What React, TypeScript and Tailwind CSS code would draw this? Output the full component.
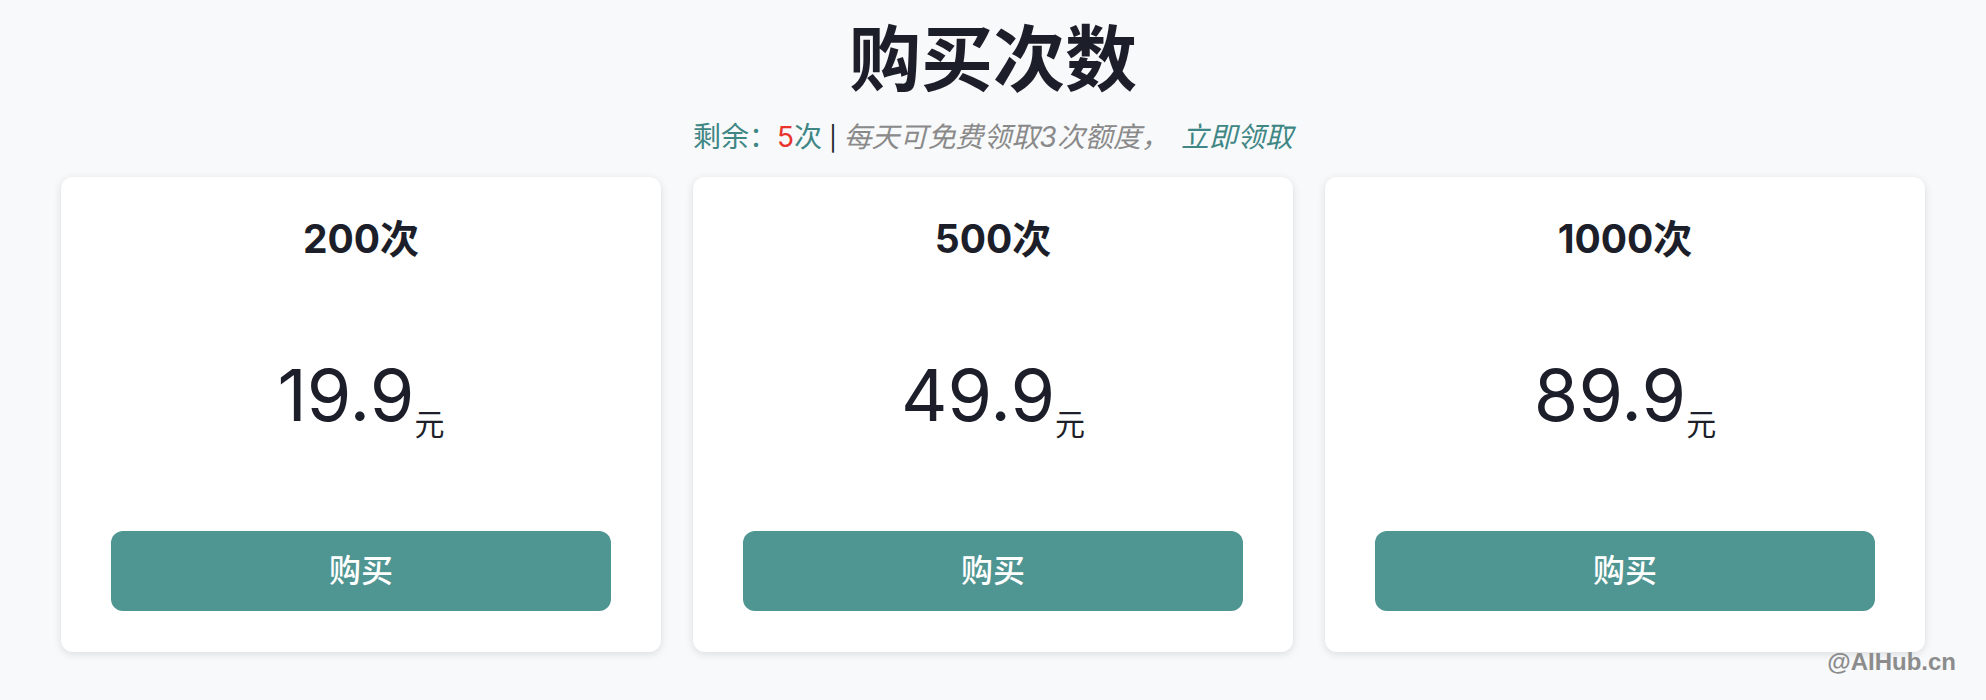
import React from "react"

const plans = [
  { count: "200次", price: "19.9" },
  { count: "500次", price: "49.9" },
  { count: "1000次", price: "89.9" },
]

function PlanCard({ count, price }: { count: string; price: string }) {
  return (
    <div className="bg-white rounded-xl shadow-[0_2px_8px_rgba(0,0,0,0.12)] pt-[42px] pb-[41px] px-[50px] flex flex-col items-center">
      <h2 className="text-[39px] leading-[40px] font-bold text-[#1c1f2a]">{count}</h2>
      <div className="mt-[100px] text-center leading-none text-[#1c1f2a]">
        <span className="text-[72px]">{price}</span>
        <span className="text-[30px] align-[-14px]">元</span>
      </div>
      <button className="mt-[92px] w-full h-[80px] rounded-xl bg-[#4f9592] text-white text-[32px] font-medium">
        购买
      </button>
    </div>
  )
}

export default function App() {
  return (
    <div className="relative min-h-screen bg-[#f8f9fb] font-['Inter','Noto_Sans_CJK_SC',sans-serif]">
      <div className="pt-[23px] flex flex-col items-center">
        <h1 className="text-[72px] leading-[72px] font-bold text-[#1c1f2a]">购买次数</h1>
        <p className="mt-[24px] text-[28px] leading-[36px]">
          <span className="text-[#3f8785]">剩余：</span>
          <span className="text-[#e8342a]">5</span>
          <span className="text-[#3f8785]">次</span>
          <span className="text-[#1c1f2a] text-[24px]"> | </span>
          <span className="italic text-[#8a8a8a]">每天可免费领取3次额度，</span>
          <span className="italic text-[#3f8785] ml-3">立即领取</span>
        </p>
      </div>
      <div className="mx-auto w-[1864px] mt-[20px] grid grid-cols-3 gap-8">
        {plans.map((p) => (
          <PlanCard key={p.count} {...p} />
        ))}
      </div>
      <div className="absolute right-[30px] top-[644px] text-[24px] font-bold text-[#8c8c8c] font-['Liberation_Sans',sans-serif]">
        @AIHub.cn
      </div>
    </div>
  )
}
